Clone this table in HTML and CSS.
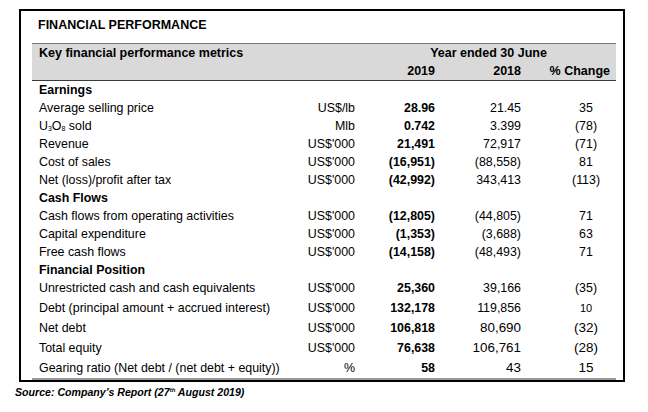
FILE: index.html
```html
<!DOCTYPE html>
<html>
<head>
<meta charset="utf-8">
<link rel="stylesheet" href="styles.css">
</head>
<body>
<div class="panel">
  <div class="title">FINANCIAL PERFORMANCE</div>
  <table class="fin">
    <colgroup>
      <col class="c-label"><col class="c-unit"><col class="c-cur"><col class="c-prev"><col class="c-chg">
    </colgroup>
    <thead>
      <tr class="h1">
        <th colspan="2" class="label">Key financial performance metrics</th>
        <th colspan="3" class="year">Year ended 30 June</th>
      </tr>
      <tr class="h2">
        <th colspan="2"></th>
        <th class="num">2019</th>
        <th class="num">2018</th>
        <th class="chg-h">% Change</th>
      </tr>
    </thead>
    <tbody>
      <tr><td class="label sec" colspan="5">Earnings</td></tr>
      <tr><td class="label">Average selling price</td><td class="unit">US$/lb</td><td class="cur">28.96</td><td class="num">21.45</td><td class="chg">35</td></tr>
      <tr><td class="label">U<sub>3</sub>O<sub>8</sub> sold</td><td class="unit">Mlb</td><td class="cur">0.742</td><td class="num">3.399</td><td class="chg">(78)</td></tr>
      <tr><td class="label">Revenue</td><td class="unit">US$'000</td><td class="cur">21,491</td><td class="num">72,917</td><td class="chg">(71)</td></tr>
      <tr><td class="label">Cost of sales</td><td class="unit">US$'000</td><td class="cur">(16,951)</td><td class="num">(88,558)</td><td class="chg">81</td></tr>
      <tr><td class="label">Net (loss)/profit after tax</td><td class="unit">US$'000</td><td class="cur">(42,992)</td><td class="num">343,413</td><td class="chg">(113)</td></tr>
      <tr><td class="label sec" colspan="5">Cash Flows</td></tr>
      <tr><td class="label">Cash flows from operating activities</td><td class="unit">US$'000</td><td class="cur">(12,805)</td><td class="num">(44,805)</td><td class="chg">71</td></tr>
      <tr><td class="label">Capital expenditure</td><td class="unit">US$'000</td><td class="cur">(1,353)</td><td class="num">(3,688)</td><td class="chg">63</td></tr>
      <tr><td class="label">Free cash flows</td><td class="unit">US$'000</td><td class="cur">(14,158)</td><td class="num">(48,493)</td><td class="chg">71</td></tr>
      <tr><td class="label sec" colspan="5">Financial Position</td></tr>
      <tr><td class="label">Unrestricted cash and cash equivalents</td><td class="unit">US$'000</td><td class="cur">25,360</td><td class="num">39,166</td><td class="chg">(35)</td></tr>
      <tr class="tall"><td class="label">Debt (principal amount + accrued interest)</td><td class="unit">US$'000</td><td class="cur">132,178</td><td class="num">119,856</td><td class="chg small">10</td></tr>
      <tr class="tall"><td class="label">Net debt</td><td class="unit">US$'000</td><td class="cur">106,818</td><td class="num big">80,690</td><td class="chg big">(32)</td></tr>
      <tr class="tall"><td class="label">Total equity</td><td class="unit">US$'000</td><td class="cur">76,638</td><td class="num big">106,761</td><td class="chg big">(28)</td></tr>
      <tr class="tall"><td class="label">Gearing ratio (Net debt / (net debt + equity))</td><td class="unit">%</td><td class="cur">58</td><td class="num big">43</td><td class="chg big">15</td></tr>
    </tbody>
  </table>
  <div class="rule"></div>
</div>
<div class="source">Source: Company’s Report (27<sup>th</sup> August 2019)</div>
</body>
</html>
```

FILE: styles.css
```css
html, body {
  margin: 0;
  padding: 0;
  background: #ffffff;
}
body {
  font-family: "Liberation Sans", Arial, sans-serif;
  color: #000;
}
.panel {
  margin: 9px 0 0 19px;
  border: 2px solid #000;
  padding: 0 7px 0 11px;
  box-sizing: content-box;
  width: 584px;
}
.title {
  font-weight: bold;
  font-size: 12.5px;
  line-height: 18px;
  padding: 5px 0 0 6px;
  margin-bottom: 9px;
}
.fin {
  width: 584px;
  table-layout: fixed;
  border-collapse: collapse;
  border-spacing: 0;
  font-size: 12.4px;
}
.c-label { width: 268px; }
.c-unit { width: 55px; }
.c-cur { width: 80px; }
.c-prev { width: 86px; }
.c-chg { width: 95px; }
.fin th, .fin td {
  padding: 0;
  line-height: 18px;
  height: 18px;
  vertical-align: baseline;
  white-space: nowrap;
}
.fin thead {
  background: #d9d9d9;
}
.fin thead tr.h1 th {
  border-top: 1px solid #7a7a7a;
}
.fin thead tr.h2 th {
  border-bottom: 1px solid #3a3a3a;
}
.fin th {
  font-weight: bold;
  font-size: 12.5px;
}
.fin th.label { text-align: left; padding-left: 7px; }
.fin th.year { text-align: center; padding-left: 6px; }
.fin th.num { text-align: right; }
.fin th.chg-h { text-align: right; padding-right: 6px; }
.fin td.label { text-align: left; padding-left: 7px; }
.fin td.sec { font-weight: bold; }
.fin td.unit { text-align: right; }
.fin td.cur { text-align: right; font-weight: bold; }
.fin td.num { text-align: right; }
.fin td.chg { text-align: center; padding-left: 35px; }
.fin tr.tall td { padding-top: 2px; }
.fin td.big { font-size: 13.4px; }
.fin td.small { font-size: 11px; }
.fin td.chg.big { font-size: 13.5px; }
sub {
  font-size: 7px;
  vertical-align: -1px;
  line-height: 0;
}
.rule {
  margin-top: 1px;
  height: 2px;
  background: #9a9a9a;
}
.source {
  margin: 4px 0 0 15px;
  font-family: "Liberation Sans", Arial, sans-serif;
  font-weight: bold;
  font-style: italic;
  font-size: 10.6px;
  line-height: 12px;
}
.source sup {
  font-size: 6px;
  line-height: 0;
  vertical-align: 4px;
}
```
